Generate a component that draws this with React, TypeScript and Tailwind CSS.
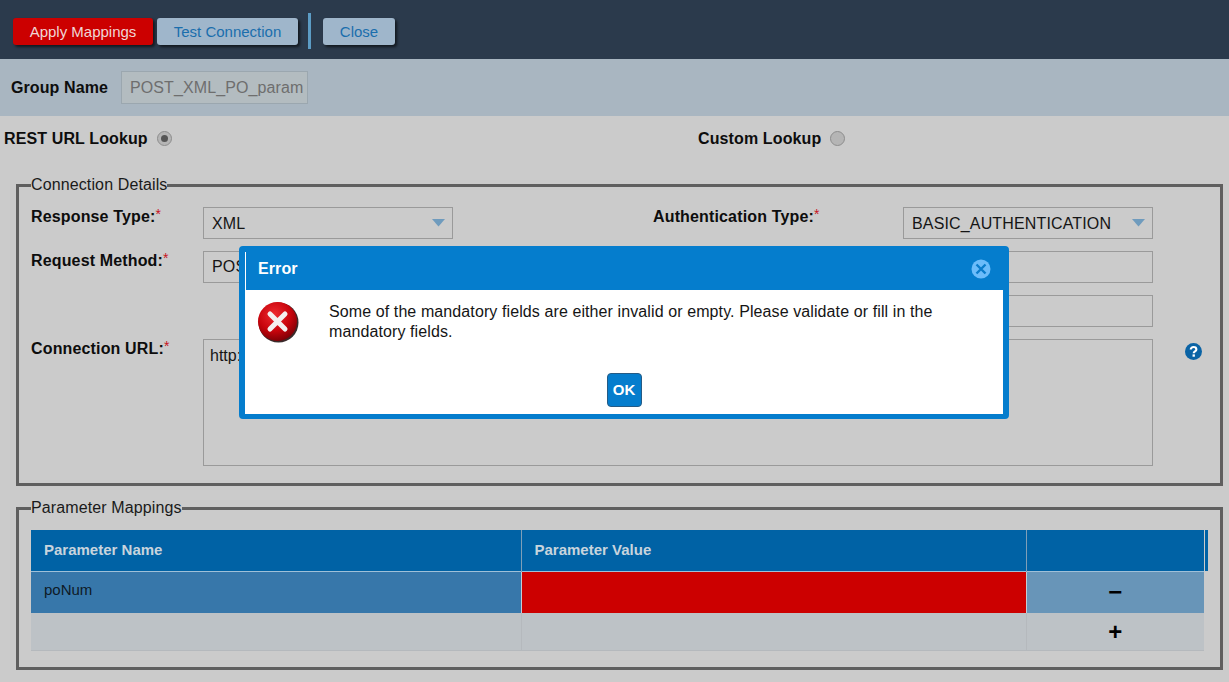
const fontStack = "font-['Liberation_Sans',Arial,sans-serif]";

function Arrow() {
  return (
    <svg width="13" height="8" viewBox="0 0 13 8" className="shrink-0">
      <path d="M0 0H13L6.5 7.5Z" fill="#6f9bbd" />
    </svg>
  );
}

function Select({ value }: { value: string }) {
  return (
    <div className="flex h-8 w-[250px] shrink-0 items-center justify-between border border-[#9a9a9a] pl-2 pr-[7px] text-base tracking-[0.15px] text-[#151515]">
      <span className="pt-px">{value}</span>
      <Arrow />
    </div>
  );
}

function TextBox({ value }: { value?: string }) {
  return (
    <div className="flex h-8 w-[250px] shrink-0 items-center border border-[#9a9a9a] pl-2 text-base tracking-[0.15px] text-[#151515]">
      {value}
    </div>
  );
}

function FieldLabel({ text, width }: { text: string; width: string }) {
  return (
    <div className={`${width} shrink-0 pt-px text-base font-bold leading-[18px] tracking-[0.15px] text-[#0d0d0d]`}>
      {text}
      <span className="align-[3px] text-sm font-normal leading-[0] text-[#c8141e]">*</span>
    </div>
  );
}

function Radio({ checked }: { checked?: boolean }) {
  return (
    <span className="flex h-[15px] w-[15px] items-center justify-center rounded-full border border-[#8d8d8d] bg-[#b5b5b5]">
      {checked && <span className="h-[7px] w-[7px] rounded-full bg-[#555555]" />}
    </span>
  );
}

function ErrorIcon() {
  return (
    <svg width="42" height="42" viewBox="0 0 42 42">
      <defs>
        <radialGradient id="errorRed" cx="42%" cy="32%" r="70%">
          <stop offset="0%" stopColor="#ee2a30" />
          <stop offset="60%" stopColor="#c8040c" />
          <stop offset="100%" stopColor="#7c0006" />
        </radialGradient>
      </defs>
      <circle cx="21.5" cy="21.5" r="20" fill="#3a2a2a" />
      <circle cx="20.5" cy="20.5" r="19.5" fill="url(#errorRed)" />
      <path d="M13 13L28 28M28 13L13 28" stroke="#f4f0f0" strokeWidth="5" strokeLinecap="round" />
    </svg>
  );
}

function CloseIcon() {
  return (
    <svg width="20" height="20" viewBox="0 0 20 20">
      <circle cx="10" cy="10" r="9.5" fill="#6cbcfa" />
      <path d="M5.5 5.5L14.5 14.5M14.5 5.5L5.5 14.5" stroke="#0a7ccb" strokeWidth="2.4" />
    </svg>
  );
}

function HelpIcon() {
  return (
    <svg width="17" height="17" viewBox="0 0 16 16">
      <circle cx="8" cy="8" r="8" fill="#0a63a5" />
      <path d="M5.4 6.2C5.4 4.7 6.5 3.8 8 3.8C9.6 3.8 10.7 4.7 10.7 6C10.7 7.8 8.2 7.9 8.2 9.6" fill="none" stroke="#fff" strokeWidth="2" />
      <rect x="7.1" y="10.7" width="2.2" height="2.2" fill="#fff" />
    </svg>
  );
}

function TopButton({ label, width, red }: { label: string; width: string; red?: boolean }) {
  return (
    <button
      className={`flex h-[27px] shrink-0 items-center justify-center rounded-[3px] pt-[2px] text-[15px] shadow-[2px_2px_3px_rgba(0,0,0,0.6)] ${width} ${
        red ? "bg-[#cc0000] text-[#f0d6d6]" : "bg-[#9fb6cb] text-[#1a6ead]"
      }`}
    >
      {label}
    </button>
  );
}

export default function App() {
  return (
    <div className={`${fontStack} relative h-[682px] w-[1229px] overflow-hidden bg-[#cbcbcb]`}>
      <header className="flex h-[59px] items-start bg-[#2b3a4c] pl-[13px] pt-[18px]">
        <TopButton label="Apply Mappings" width="w-[140px]" red />
        <div className="w-[4px] shrink-0" />
        <TopButton label="Test Connection" width="w-[141px]" />
        <div className="-mt-[5px] ml-[10px] mr-[12px] h-9 w-[3px] bg-[#5c9cc5]" />
        <TopButton label="Close" width="w-[72px]" />
      </header>

      <section className="flex h-[57px] items-center bg-[#a9b6c1] pl-[11px]">
        <span className="w-[110px] text-base font-bold tracking-[0.1px] text-[#0d0d0d]">Group Name</span>
        <div className="flex h-[33px] w-[187px] items-center border border-[#9ba7af] bg-[#b3bcc0] pl-2 text-base tracking-[0.1px] text-[#6e6e6e]">
          POST_XML_PO_param
        </div>
      </section>

      <section className="flex h-[44px] items-center pl-1 pt-px text-base font-bold tracking-[0.12px] text-[#0d0d0d]">
        <div className="flex w-[694px] items-center gap-[9px]">
          <span>REST URL Lookup</span>
          <Radio checked />
        </div>
        <div className="flex items-center gap-[9px]">
          <span>Custom Lookup</span>
          <Radio />
        </div>
      </section>

      <fieldset className="mx-4 mt-[16px] h-[310px] w-[1207px] border-[3px] border-[#5f5f5f] pl-3 pr-0">
        <legend className="px-0 text-base leading-[18px] tracking-[0.12px] text-[#1a1a1a]">Connection Details</legend>
        <div className="flex flex-col gap-3 pt-[13px]">
          <div className="flex">
            <FieldLabel text="Response Type:" width="w-[172px]" />
            <Select value="XML" />
            <div className="w-[200px] shrink-0" />
            <FieldLabel text="Authentication Type:" width="w-[250px]" />
            <Select value="BASIC_AUTHENTICATION" />
          </div>
          <div className="flex">
            <FieldLabel text="Request Method:" width="w-[172px]" />
            <TextBox value="POST" />
            <div className="w-[450px] shrink-0" />
            <TextBox />
          </div>
          <div className="flex">
            <div className="w-[872px] shrink-0" />
            <TextBox />
          </div>
          <div className="flex">
            <FieldLabel text="Connection URL:" width="w-[172px]" />
            <div className="h-[127px] w-[950px] shrink-0 border border-[#9a9a9a] px-[6px] py-[4px] text-base text-[#151515]">http://</div>
            <div className="ml-[32px] pt-[4px]"><HelpIcon /></div>
          </div>
        </div>
      </fieldset>

      <fieldset className="mx-4 mt-[13px] h-[171px] w-[1207px] border-[3px] border-[#5f5f5f] pl-3 pr-0">
        <legend className="px-0 text-base leading-[18px] tracking-[0.12px] text-[#1a1a1a]">Parameter Mappings</legend>
        <table className="mt-[13px] w-[1173px] table-fixed border-collapse text-[15px]">
          <thead>
            <tr className="h-[41px] bg-[#0062a5] text-left font-bold text-[#c8d4dd]">
              <th className="w-[490px] border-r border-[#7f9fb8] pl-[13px]">Parameter Name</th>
              <th className="w-[505px] border-r border-[#7f9fb8] pl-[13px]">Parameter Value</th>
              <th className="relative">
                <span className="absolute -right-[4px] top-0 h-full w-[3px] bg-[#0062a5]" />
              </th>
            </tr>
          </thead>
          <tbody>
            <tr className="h-[42px] border-t border-[#9fc0d8]">
              <td className="border-r border-[#c4cdd4] bg-[#3777aa] pb-[4px] pl-[13px] text-[#0e1a26]">poNum</td>
              <td className="border-r border-[#c4cdd4] bg-[#cc0000]" />
              <td className="bg-[#6895b8] text-center text-2xl font-bold leading-none text-[#000]">−</td>
            </tr>
            <tr className="h-[37px] border-b border-[#b5b9bd] bg-[#bdc2c6]">
              <td className="border-r border-[#b5b9bd]" />
              <td className="border-r border-[#b5b9bd]" />
              <td className="pt-[2px] text-center text-[24px] font-bold leading-none text-[#000]">+</td>
            </tr>
          </tbody>
        </table>
      </fieldset>

      <div className="absolute left-[239px] top-[246px] h-[173px] w-[770px] rounded-[4px] border-x-[6px] border-b-[5px] border-t-[6px] border-[#057dcd]">
        <div className="flex h-[38px] items-center justify-between border-l border-white bg-[#057dcd] pb-[4px] pl-3 pr-[12px]">
          <span className="text-base font-bold tracking-[0.1px] text-white">Error</span>
          <CloseIcon />
        </div>
        <div className="flex h-[124px] flex-col bg-white">
          <div className="flex pt-[12px]">
            <div className="-mt-px w-[84px] shrink-0 pl-[12px]"><ErrorIcon /></div>
            <p className="w-[640px] text-base leading-[20px] tracking-[0.1px] text-[#151515]">
              Some of the mandatory fields are either invalid or empty. Please validate or fill in the mandatory fields.
            </p>
          </div>
          <div className="mt-auto flex justify-center pb-[7px]">
            <button className="h-[34px] w-[35px] rounded-[4px] border border-[#255b85] bg-[#057dcd] text-[15px] font-bold text-white">OK</button>
          </div>
        </div>
      </div>
    </div>
  );
}
